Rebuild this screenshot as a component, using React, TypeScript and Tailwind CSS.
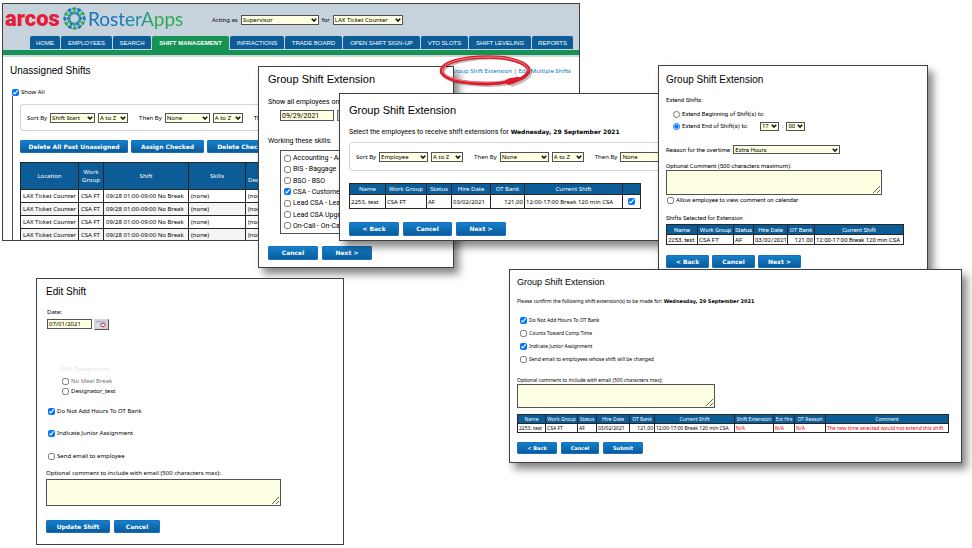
import type { ReactNode } from "react";

type WindowProps = { className: string; label: string; children: ReactNode };

function Window({ className, label, children }: WindowProps) {
  return (
    <section
      aria-label={label}
      className={`absolute overflow-hidden border border-neutral-700 bg-white ${className}`}
    >
      {children}
    </section>
  );
}

function Button({ className, children }: { className: string; children: ReactNode }) {
  return (
    <button
      type="button"
      className={`shrink-0 whitespace-nowrap rounded-[1px] border border-[#1b6fc0] bg-linear-to-b from-[#1380cb] to-[#0a5c9c] text-center font-['DejaVu_Sans',sans-serif] font-bold text-white ${className}`}
    >
      {children}
    </button>
  );
}

function Select({ className, label, value }: { className: string; label: string; value: string }) {
  return (
    <span className={`relative inline-flex shrink-0 ${className}`}>
      <select
        aria-label={label}
        className="h-full w-full appearance-none border border-neutral-600 bg-[#ffffe3] pl-px leading-none text-black"
      >
        <option>{value}</option>
      </select>
      <svg viewBox="0 0 6 4" className="pointer-events-none absolute inset-y-0 right-[2px] my-auto h-1 w-1.5">
        <path d="M0.8 0.8 3 3 5.2 0.8" fill="none" stroke="#111" strokeWidth="1.6" />
      </svg>
    </span>
  );
}

type CheckProps = {
  label?: string;
  checked?: boolean;
  type?: "checkbox" | "radio";
  className?: string;
};

function Check({ label, checked, type = "checkbox", className = "" }: CheckProps) {
  return (
    <label className={`flex items-center gap-[2px] whitespace-nowrap ${className}`}>
      <input
        type={type}
        defaultChecked={checked}
        aria-label={label ? undefined : "Select row"}
        className="m-0 size-[7px] shrink-0 accent-[#0075ff]"
      />
      {label}
    </label>
  );
}

function SortGroup({ label, value, wide, narrow }: { label: string; value: string; wide: string; narrow: string }) {
  return (
    <div className="flex shrink-0 items-center gap-[3px] whitespace-nowrap">
      {label}
      <Select className={wide} label={label} value={value} />
      <Select className={narrow} label={`${label} order`} value="A to Z" />
    </div>
  );
}

type TableProps = {
  columns: string[];
  widths: string[];
  cells: ReactNode[];
  className: string;
  headClass: string;
  rowClass: string;
};

function ShiftTable({ columns, widths, cells, className, headClass, rowClass }: TableProps) {
  return (
    <table className={`table-fixed border-collapse whitespace-nowrap ${className}`}>
      <thead>
        <tr className={`bg-[#0b5c97] text-white ${headClass}`}>
          {columns.map((column, i) => (
            <th key={i} className={`border border-neutral-800 p-0 font-normal ${widths[i]}`}>
              {column}
            </th>
          ))}
        </tr>
      </thead>
      <tbody>
        <tr className={rowClass}>
          {cells.map((cell, i) => (
            <td
              key={i}
              className={`border border-neutral-800 px-px py-0 ${i === 4 ? "text-right" : ""} ${i > 5 ? "text-red-600" : ""}`}
            >
              {cell}
            </td>
          ))}
        </tr>
      </tbody>
    </table>
  );
}

const shiftColumns = ["Name", "Work Group", "Status", "Hire Date", "OT Bank", "Current Shift"];
const shiftCells = ["2253, test", "CSA FT", "AF", "03/02/2021", "121.00", "12:00-17:00 Break 120 min CSA"];

const tabs = [
  { name: "HOME", width: "w-[30px]" },
  { name: "EMPLOYEES", width: "w-[51px]" },
  { name: "SEARCH", width: "w-[38px]" },
  { name: "SHIFT MANAGEMENT", width: "w-[77px]", active: true },
  { name: "INFRACTIONS", width: "w-[54px]" },
  { name: "TRADE BOARD", width: "w-[57px]" },
  { name: "OPEN SHIFT SIGN-UP", width: "w-[77px]" },
  { name: "VTO SLOTS", width: "w-[47px]" },
  { name: "SHIFT LEVELING", width: "w-[62px]" },
  { name: "REPORTS", width: "w-[41px]" },
];

const skills = [
  "Accounting - Ac",
  "BIS - Baggage",
  "BSO - BSO",
  "CSA - Customer",
  "Lead CSA - Lea",
  "Lead CSA Upgra",
  "On-Call - On-Ca",
];

const spokes = [0, 30, 60, 90, 120, 150, 180, 210, 240, 270, 300, 330];

function Logo() {
  return (
    <div className="flex h-[27px] w-[182px] items-center pb-[3px] leading-none">
      <span className="w-[56px] font-[Roboto,sans-serif] text-[22px] font-black text-[#e51b3a]">arcos</span>
      <svg viewBox="-12 -12 24 24" className="mx-[2px] size-[23px] shrink-0">
        {spokes.map((angle, i) => (
          <g key={angle} transform={`rotate(${angle})`} fill={i % 2 ? "#1877b9" : "#35a65a"}>
            <path d="M-2.6-11Q0-12.4 2.4-11L1-8.4Q-.5-9-1.8-8.4Z" />
            <path d="M-1.8-8Q1-8.6 2-6.2Q.8-4.6-.9-5Z" />
          </g>
        ))}
        <circle r="5" fill="none" stroke="#1f86b3" strokeWidth="1.2" />
      </svg>
      <span className="bg-linear-to-r from-[#1b6fb8] from-30% via-[#1f93a0] via-55% to-[#2da84c] to-70% bg-clip-text font-[Lato,sans-serif] text-[19px] leading-6 text-transparent">
        RosterApps
      </span>
    </div>
  );
}

function UnassignedShifts() {
  return (
    <Window label="Unassigned Shifts" className="left-[2px] top-[3px] h-[238px] w-[578px] text-[6px] leading-[8px]">
      <header className="bg-[#c6d2dc]">
        <div className="flex h-8 items-center gap-[3px] pl-[2px]">
          <Logo />
          <span className="ml-[22px]">Acting as</span>
          <Select className="h-[10px] w-[78px]" label="Acting as" value="Supervisor" />
          <span>for</span>
          <Select className="h-[10px] w-[70px]" label="Location" value="LAX Ticket Counter" />
        </div>
        <nav className="flex h-[14px] gap-px pl-[27px] font-['Liberation_Sans',sans-serif]">
          {tabs.map((tab) => (
            <a
              key={tab.name}
              href="#"
              className={`${tab.width} flex shrink-0 items-center justify-center whitespace-nowrap rounded-t-[2px] text-white ${
                tab.active ? "bg-[#149354] font-bold" : "mb-px bg-[#0b5c97]"
              }`}
            >
              {tab.name}
            </a>
          ))}
        </nav>
      </header>
      <div className="h-[7px] border-b-2 border-neutral-300 bg-[#149354]" />
      <div className="flex justify-between pl-[7px] pr-2 pt-[6px]">
        <h1 className="font-['Liberation_Sans',sans-serif] text-[10px] leading-[16px]">Unassigned Shifts</h1>
        <p className="pt-1 text-neutral-700">
          <a href="#" className="text-[#0b7ac4]">Group Shift Extension</a> |{" "}
          <a href="#" className="text-[#0b7ac4]">Edit Multiple Shifts</a>
        </p>
      </div>
      <Check label="Show All" checked className="ml-[9px] mt-[9px]" />
      <div className="ml-[9px] h-[150px] border-l border-neutral-600 pl-[7px] pt-2">
        <div className="flex h-[27px] w-[520px] items-center gap-[11px] rounded-[3px] border border-neutral-300 pl-[6px]">
          <SortGroup label="Sort By" value="Shift Start" wide="h-[10px] w-[45px]" narrow="h-[10px] w-[30px]" />
          <SortGroup label="Then By" value="None" wide="h-[10px] w-[45px]" narrow="h-[10px] w-[30px]" />
          <SortGroup label="Then By" value="None" wide="h-[10px] w-[45px]" narrow="h-[10px] w-[30px]" />
        </div>
        <div className="mt-[9px] flex gap-[3px]">
          <Button className="h-[13px] w-[108px]">Delete All Past Unassigned</Button>
          <Button className="h-[13px] w-[73px]">Assign Checked</Button>
          <Button className="h-[13px] w-[73px]">Delete Checked</Button>
        </div>
        <table className="mt-[9px] w-[290px] table-fixed border-collapse whitespace-nowrap">
          <thead>
            <tr className="h-[27px] bg-[#0b5c97] text-white">
              <th className="w-[58px] border border-neutral-800 p-0 font-normal">Location</th>
              <th className="w-[25px] border border-neutral-800 p-0 font-normal">Work<br />Group</th>
              <th className="w-[85px] border border-neutral-800 p-0 font-normal">Shift</th>
              <th className="w-[57px] border border-neutral-800 p-0 font-normal">Skills</th>
              <th className="border border-neutral-800 px-[2px] text-left font-normal"><br />Des</th>
            </tr>
          </thead>
          <tbody>
            {[1, 2, 3, 4].map((row) => (
              <tr key={row} className="h-[13px] even:bg-neutral-100">
                <td className="border border-neutral-800 px-[2px] py-0">LAX Ticket Counter</td>
                <td className="border border-neutral-800 px-[2px] py-0">CSA FT</td>
                <td className="border border-neutral-800 px-[2px] py-0">09/28 01:00-09:00 No Break</td>
                <td className="border border-neutral-800 px-[2px] py-0">(none)</td>
                <td className="border border-neutral-800 px-[2px] py-0">(none)</td>
              </tr>
            ))}
          </tbody>
        </table>
      </div>
    </Window>
  );
}

function SelectSkills() {
  return (
    <Window
      label="Select skills"
      className="left-[258px] top-[66px] w-[196px] px-[9px] pb-[7px] pt-[4px] font-[Roboto,sans-serif] text-[7px] leading-[8px] shadow-[5px_6px_8px_rgba(0,0,0,0.48)]"
    >
      <h2 className="font-['Liberation_Sans',sans-serif] text-[11px] leading-[16px]">Group Shift Extension</h2>
      <label htmlFor="show-date" className="mt-[11px] block">Show all employees on</label>
      <div className="ml-[12px] mt-[4px] flex gap-[3px]">
        <input id="show-date" defaultValue="09/29/2021" className="h-[11px] w-[54px] border border-neutral-600 bg-[#ffffe3] px-px" />
        <button type="button" aria-label="Pick a date" className="h-[11px] w-[16px] border border-neutral-500 bg-neutral-300" />
      </div>
      <p className="mt-4">Working these skills:</p>
      <div className="ml-[12px] mt-[5px] flex h-[84px] w-[150px] flex-col justify-between border border-neutral-600 px-[3px] py-[3px]">
        {skills.map((skill) => (
          <Check key={skill} label={skill} checked={skill.startsWith("CSA")} />
        ))}
      </div>
      <div className="mt-3 flex gap-1 text-[6px]">
        <Button className="h-[14px] w-[50px]">Cancel</Button>
        <Button className="h-[14px] w-[50px]">Next &gt;</Button>
      </div>
    </Window>
  );
}

function SelectEmployees() {
  return (
    <Window
      label="Select employees"
      className="left-[339px] top-[93px] w-[340px] pb-1 pl-[9px] pt-2 font-['Noto_Sans',sans-serif] text-[6px] leading-[8px] shadow-[5px_6px_8px_rgba(0,0,0,0.48)]"
    >
      <h2 className="font-['Liberation_Sans',sans-serif] text-[11px] leading-[16px]">Group Shift Extension</h2>
      <p className="mt-[10px] font-[Roboto,sans-serif] text-[7px]">
        Select the employees to receive shift extensions for{" "}
        <b className="font-['DejaVu_Sans',sans-serif] text-[6px]">Wednesday, 29 September 2021</b>
      </p>
      <div className="mt-[6px] flex h-[29px] w-[360px] items-center gap-[11px] rounded-[3px] border border-neutral-300 pl-[6px]">
        <SortGroup label="Sort By" value="Employee" wide="h-[10px] w-[49px]" narrow="h-[10px] w-[32px]" />
        <SortGroup label="Then By" value="None" wide="h-[10px] w-[49px]" narrow="h-[10px] w-[32px]" />
        <SortGroup label="Then By" value="None" wide="h-[10px] w-[49px]" narrow="h-[10px] w-[32px]" />
      </div>
      <ShiftTable
        className="mt-3 w-[291px]"
        headClass="h-[11px]"
        rowClass="h-[14px]"
        columns={[...shiftColumns, ""]}
        widths={["w-[36px]", "w-[41px]", "w-[25px]", "w-[39px]", "w-[34px]", "w-[98px]", "w-[18px]"]}
        cells={[...shiftCells, <Check checked className="justify-center" />]}
      />
      <div className="mt-[13px] flex gap-1">
        <Button className="h-[14px] w-[50px]">&lt; Back</Button>
        <Button className="h-[14px] w-[49px]">Cancel</Button>
        <Button className="h-[14px] w-[50px]">Next &gt;</Button>
      </div>
    </Window>
  );
}

function ExtendShifts() {
  return (
    <Window
      label="Extend shifts"
      className="left-[658px] top-[65px] w-[270px] pb-[6px] pl-[7px] pt-[6px] font-[Roboto,sans-serif] text-[6px] leading-[8px] shadow-[5px_6px_8px_rgba(0,0,0,0.48)]"
    >
      <h2 className="font-['Liberation_Sans',sans-serif] text-[10px] leading-[16px]">Group Shift Extension</h2>
      <p className="mt-2">Extend Shifts:</p>
      <Check type="radio" label="Extend Beginning of Shift(s) to:" className="ml-[7px] mt-[6px]" />
      <div className="ml-[7px] mt-[3px] flex h-[10px] items-center gap-[3px]">
        <Check type="radio" checked label="Extend End of Shift(s) to:" className="w-[84px]" />
        <Select className="h-[9px] w-[19px]" label="Hour" value="17" />
        :
        <Select className="h-[9px] w-[19px]" label="Minute" value="00" />
      </div>
      <div className="mt-[14px] flex items-center gap-[2px]">
        Reason for the overtime:
        <Select className="h-[9px] w-[107px]" label="Reason for the overtime" value="Extra Hours" />
      </div>
      <label htmlFor="extend-comment" className="mt-2 block">Optional Comment (500 characters maximum):</label>
      <textarea id="extend-comment" className="block h-[25px] w-[216px] border border-neutral-600 bg-[#ffffe3]" />
      <Check label="Allow employee to view comment on calendar" className="ml-px mt-px" />
      <p className="mt-[10px]">Shifts Selected for Extension</p>
      <ShiftTable
        className="mt-[2px] w-[237px]"
        headClass="h-[10px]"
        rowClass="h-[10px]"
        columns={shiftColumns}
        widths={["w-[31px]", "w-[36px]", "w-[20px]", "w-[34px]", "w-[27px]", "w-[89px]"]}
        cells={shiftCells}
      />
      <div className="mt-[10px] flex gap-[3px]">
        <Button className="h-[13px] w-[43px]">&lt; Back</Button>
        <Button className="h-[13px] w-[43px]">Cancel</Button>
        <Button className="h-[13px] w-[43px]">Next &gt;</Button>
      </div>
    </Window>
  );
}

function ConfirmExtension() {
  return (
    <Window
      label="Confirm extension"
      className="left-[509px] top-[269px] w-[453px] pb-2 pl-[7px] pt-[5px] text-[5px] leading-[7px] shadow-[5px_6px_8px_rgba(0,0,0,0.48)]"
    >
      <h2 className="font-['Liberation_Sans',sans-serif] text-[9px] leading-[14px]">Group Shift Extension</h2>
      <p className="mt-[9px]">
        Please confirm the following shift extension(s) to be made for:{" "}
        <b className="font-['DejaVu_Sans',sans-serif]">Wednesday, 29 September 2021</b>
      </p>
      <div className="ml-[3px] mt-[12px] flex flex-col gap-[6px]">
        <Check label="Do Not Add Hours To OT Bank" checked />
        <Check label="Counts Toward Comp Time" />
        <Check label="Indicate Junior Assignment" checked />
        <Check label="Send email to employees whose shift will be changed" />
      </div>
      <label htmlFor="confirm-comment" className="mt-[14px] block">Optional comment to include with email (500 characters max):</label>
      <textarea id="confirm-comment" className="block h-[24px] w-[198px] border border-neutral-600 bg-[#ffffe3]" />
      <ShiftTable
        className="mt-[6px] w-[431px]"
        headClass="h-[9px]"
        rowClass="h-[9px]"
        columns={[...shiftColumns, "Shift Extension", "Ext Hrs", "OT Reason", "Comment"]}
        widths={["w-[28px]", "w-[32px]", "w-[19px]", "w-[33px]", "w-[25px]", "w-[80px]", "w-[39px]", "w-[21px]", "w-[31px]", "w-[123px]"]}
        cells={[...shiftCells, "N/A", "N/A", "N/A", "The new time selected would not extend this shift"]}
      />
      <div className="mt-[9px] flex gap-1">
        <Button className="h-[12px] w-[40px]">&lt; Back</Button>
        <Button className="h-[12px] w-[38px]">Cancel</Button>
        <Button className="h-[12px] w-[40px]">Submit</Button>
      </div>
    </Window>
  );
}

function EditShift() {
  return (
    <Window
      label="Edit Shift"
      className="left-[36px] top-[278px] w-[308px] pb-[11px] pl-[9px] pt-[5px] text-[6px] leading-[8px]"
    >
      <h2 className="font-['Liberation_Sans',sans-serif] text-[10px] leading-[16px]">Edit Shift</h2>
      <label htmlFor="edit-date" className="ml-px mt-2 block">Date:</label>
      <div className="ml-px mt-[3px] flex gap-[2px]">
        <input id="edit-date" defaultValue="07/01/2021" className="h-[10px] w-[45px] border border-neutral-600 bg-[#ffffe3] px-px" />
        <button type="button" aria-label="Pick a date" className="flex h-[11px] w-[15px] items-center justify-center border border-t-neutral-300 border-l-neutral-300 border-r-neutral-600 border-b-neutral-600 bg-neutral-300">
          <svg viewBox="0 0 11 7" className="h-[7px] w-[11px]">
            <path d="M0 0H10V7H0Z" fill="#d8dce6" />
            <path d="M0 0H10V1.5H0Z" fill="#a9bad6" />
            <ellipse cx="7" cy="4" rx="2.4" ry="1.8" fill="#fff" stroke="#d0283c" />
          </svg>
        </button>
      </div>
      <p className="ml-[14px] mt-[35px] text-neutral-200">Shift Designators:</p>
      <Check label="No Meal Break" className="ml-4 mt-1 text-neutral-500" />
      <Check label="Designator_test" className="ml-4 mt-[2px]" />
      <Check label="Do Not Add Hours To OT Bank" checked className="ml-[2px] mt-3" />
      <Check label="Indicate Junior Assignment" checked className="ml-[2px] mt-[14px]" />
      <Check label="Send email to employee" className="ml-[2px] mt-[15px]" />
      <label htmlFor="edit-comment" className="mt-[9px] block">Optional comment to include with email (500 characters max):</label>
      <textarea id="edit-comment" className="mt-[2px] block h-[27px] w-[235px] border border-neutral-600 bg-[#ffffe3]" />
      <div className="mt-[14px] flex gap-1">
        <Button className="h-[13px] w-[64px]">Update Shift</Button>
        <Button className="h-[13px] w-[46px]">Cancel</Button>
      </div>
    </Window>
  );
}

function RedCircle() {
  return (
    <svg viewBox="0 0 98 36" className="pointer-events-none absolute left-[438px] top-[53px] h-9 w-[98px]">
      <g fill="none" strokeLinecap="round">
        <path d="M82 28C59 35 17 33 6 23C0 12 23 6 51 5C81 4 98 15 91 23C87 27 82 30 74 32" stroke="#000" strokeOpacity="0.25" strokeWidth="3.5" />
        <path d="M80 26C57 34 12 31 4 20C0 10 24 4 51 4C80 4 96 14 89 21C86 25 81 27 75 28" stroke="#dd1b2b" strokeWidth="3.6" />
        <path d="M79 24C72 25 68 26 67 28L70 32C76 31 82 28 84 25Z" fill="#dd1b2b" />
        <path d="M64 28C40 31 12 28 5 20C0 10 25 4 51 4C78 4 92 12 90 18" stroke="#f39aa0" strokeWidth="0.8" />
      </g>
    </svg>
  );
}

export default function App() {
  return (
    <main className="relative h-screen min-h-[548px] w-full overflow-hidden bg-white font-['Noto_Sans',sans-serif] text-black">
      <UnassignedShifts />
      <SelectSkills />
      <SelectEmployees />
      <ExtendShifts />
      <ConfirmExtension />
      <EditShift />
      <RedCircle />
    </main>
  );
}
